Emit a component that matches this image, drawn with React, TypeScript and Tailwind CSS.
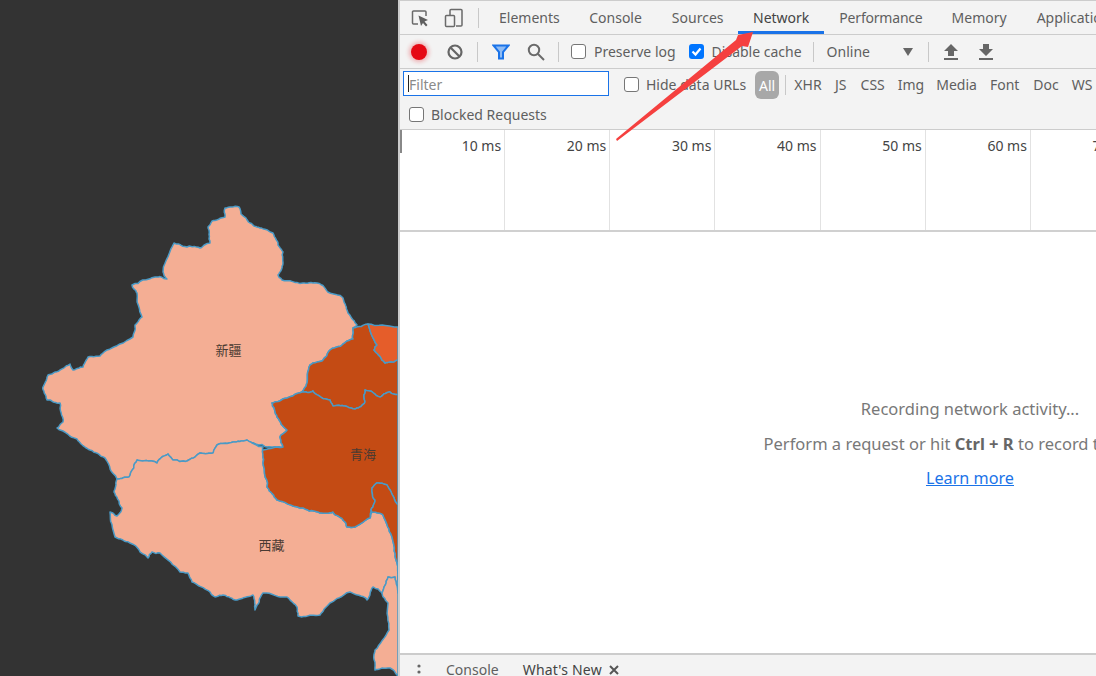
import React from "react";

const xinjiang = "M225,208 L232,207 L239,207 L241,214 L250,223 L260,228 L273,233 L278,245 L283,252 L283,263 L278,275 L282,280 L303,283 L317,283 L330,293 L343,298 L348,313 L357,325 L353,328 L353,339 L342,345 L330,350 L323,360 L310,365 L307,383 L302,392 L287,398 L272,403 L277,417 L287,430 L280,437 L283,447 L267,447 L247,440 L233,442 L217,445 L213,453 L200,453 L187,461 L173,460 L168,454 L162,457 L157,463 L137,460 L129,477 L117,479 L105,458 L90,450 L77,439 L57,428 L63,422 L60,403 L50,400 L47,400 L43,387 L48,375 L60,370 L70,364 L73,370 L83,367 L88,357 L100,356 L107,350 L133,337 L135,325 L142,317 L137,293 L132,285 L155,277 L167,279 L163,272 L174,243 L187,247 L200,248 L210,243 L208,227 L212,221 L225,217 Z";
const xizang = "M117,479 L129,477 L137,460 L157,463 L162,457 L168,454 L173,460 L187,461 L200,453 L213,453 L217,445 L233,442 L247,440 L263,447 L263,463 L267,487 L277,500 L300,508 L320,513 L333,512 L345,522 L347,527 L355,527 L370,518 L372,512 L383,515 L392,537 L397,563 L398,593 L395,577 L388,577 L382,593 L373,587 L367,600 L350,592 L330,603 L320,615 L298,616 L297,607 L287,597 L263,593 L255,610 L253,595 L237,600 L223,595 L215,597 L210,592 L192,582 L188,573 L180,572 L160,553 L152,552 L148,558 L130,543 L115,537 L110,512 L117,516 L122,508 L114,492 Z";
const yunnan = "M382,593 L388,577 L395,577 L398,593 L398,676 L390,668 L375,670 L375,650 L389,630 L388,603 Z";
const qinghai = "M353,328 L368,324 L377,345 L374,350 L385,363 L398,360 L398,395 L390,392 L380,397 L365,390 L365,402 L355,409 L345,406 L333,406 L330,400 L322,398 L313,391 L302,392 L307,383 L310,365 L323,360 L330,350 L342,345 L353,339 Z";
const qinghai2 = "M272,403 L287,398 L302,392 L313,391 L322,398 L330,400 L333,406 L345,406 L355,409 L365,402 L365,390 L380,397 L390,392 L398,395 L398,505 L387,485 L377,483 L372,488 L375,500 L371,510 L370,518 L355,527 L347,527 L345,522 L333,512 L320,513 L300,508 L277,500 L267,487 L263,463 L263,450 L283,447 L280,437 L287,430 L277,417 Z";
const sichuan = "M377,483 L387,485 L398,505 L398,593 L397,563 L392,537 L383,515 L372,512 L371,510 L375,500 L372,488 Z";
const ningxia = "M368,324 L398,327 L398,360 L385,363 L374,350 L377,345 Z";

// Adds the fine, coast-like wobble of a map outline. The offset depends only on
// the midpoint, so a border shared by two provinces wobbles the same way in both.
function hash(x: number, y: number) {
  const s = Math.sin(x * 12.9898 + y * 78.233) * 43758.5453;
  return s - Math.floor(s) - 0.5;
}
function wobble(a: number[], b: number[], level: number): number[][] {
  const len = Math.hypot(a[0] - b[0], a[1] - b[1]);
  if (level === 0 || len < 2.5) return [];
  const mx = (a[0] + b[0]) / 2;
  const my = (a[1] + b[1]) / 2;
  const amp = Math.min(2.2, len * 0.22);
  const m = [mx + hash(mx, my) * amp, my + hash(my, mx) * amp];
  return [...wobble(a, m, level - 1), m, ...wobble(m, b, level - 1)];
}
function rough(d: string) {
  const pts = d.replace(/[MZ]/g, "").split("L").map((p) => p.trim().split(",").map(Number));
  const out: number[][] = [];
  pts.forEach((p, i) => {
    const q = pts[(i + 1) % pts.length];
    out.push(p);
    const onEdge = p[0] >= 398 && q[0] >= 398;
    if (!onEdge) out.push(...wobble(p, q, 3));
  });
  return "M" + out.map((p) => p[0].toFixed(1) + "," + p[1].toFixed(1)).join(" L") + " Z";
}

function Box({ checked }: { checked?: boolean }) {
  if (checked) {
    return (
      <span className="flex h-[15px] w-[15px] shrink-0 items-center justify-center rounded-[3px] bg-[#0075ff]">
        <svg width="13" height="13" viewBox="0 0 13 13" fill="none" stroke="#fff" strokeWidth="2.2">
          <path d="M2.5 6.5 L5.5 9.5 L10.5 3.5" />
        </svg>
      </span>
    );
  }
  return <span className="block h-[15px] w-[15px] shrink-0 rounded-[3px] border border-[#767676] bg-white" />;
}

const tabs = [
  ["Elements", "px-[15px]"],
  ["Console", "pl-[14.5px] pr-[15px]"],
  ["Sources", "pl-[15px] pr-[14.5px]"],
  ["Network", "border-b-[3px] border-[#1a73e8] px-[15px] pt-[3px] text-[#444444]"],
  ["Performance", "pl-[15px] pr-[14px] tracking-[-0.2px]"],
  ["Memory", "px-[15px]"],
  ["Application", "px-[15px]"],
];
const types = [
  ["XHR", "ml-[8px] tracking-[0.2px]"],
  ["JS", "ml-[13px]"],
  ["CSS", "ml-[14px]"],
  ["Img", "ml-[13px]"],
  ["Media", "ml-[12px]"],
  ["Font", "ml-[13px]"],
  ["Doc", "ml-[14px]"],
  ["WS", "ml-[13px]"],
];
const ticks = ["10 ms", "20 ms", "30 ms", "40 ms", "50 ms", "60 ms", "70 ms"];

export default function App() {
  return (
    <div
      className="relative flex h-[676px] w-[1096px] overflow-hidden bg-[#333333] text-[14px] text-[#5f5f5f]"
      style={{ fontFamily: '"Noto Sans", "Noto Sans CJK SC", sans-serif' }}
    >
      <div className="w-[398px] shrink-0">
        <svg width="398" height="676" viewBox="0 0 398 676" className="block">
          <g stroke="#4a9ac6" strokeWidth="1.5" strokeLinejoin="round">
            <path d={rough(xinjiang)} fill="#f4ae94" />
            <path d={rough(xizang)} fill="#f4ae94" />
            <path d={rough(yunnan)} fill="#f4ae94" />
            <path d={rough(qinghai)} fill="#c44b14" />
            <path d={rough(qinghai2)} fill="#c44b14" />
            <path d={rough(sichuan)} fill="#c44b14" />
            <path d={rough(ningxia)} fill="#e55d2a" />
          </g>
          <g fontSize="13" fill="#4a3a32" textAnchor="middle" style={{ fontFamily: '"Noto Sans CJK SC", sans-serif' }}>
            <text x="228.5" y="355">新疆</text>
            <text x="363" y="459">青海</text>
            <text x="271.5" y="550">西藏</text>
          </g>
        </svg>
      </div>

      <div className="flex h-full w-[698px] shrink-0 flex-col overflow-hidden border-l-2 border-[#cccccc] bg-[#f3f3f3]">
        {/* tabs */}
        <div className="flex h-[35px] shrink-0 items-center border-b border-t border-[#cccccc] pl-[11px]">
          <svg width="18" height="18" viewBox="0 0 18 18" fill="none" className="shrink-0">
            <path d="M7 15 H2.5 a1 1 0 0 1 -1 -1 V3 a1 1 0 0 1 1 -1 H14 a1 1 0 0 1 1 1 V7" stroke="#6a6a6a" strokeWidth="1.5" />
            <path d="M7.5 6.5 L17 11 L13.5 12.5 L16.5 16 L15 17.5 L12 14 L10 17 Z" fill="#5f5f5f" />
          </svg>
          <svg width="20" height="20" viewBox="0 0 20 20" fill="none" className="ml-[15px] shrink-0">
            <path d="M6 7 V2.5 a1 1 0 0 1 1 -1 H17 a1 1 0 0 1 1 1 V17 a1 1 0 0 1 -1 1 H12" stroke="#6a6a6a" strokeWidth="1.5" />
            <rect x="1.5" y="7.5" width="9" height="11" rx="1" stroke="#6a6a6a" strokeWidth="1.5" />
          </svg>
          <span className="ml-[14px] h-[20px] w-px shrink-0 bg-[#c8c8c8]" />
          <div className="ml-[5px] flex h-full items-stretch">
            {tabs.map(([t, c]) => (
              <span key={t} className={"flex h-full shrink-0 items-center " + c}>
                {t}
              </span>
            ))}
          </div>
        </div>

        {/* toolbar */}
        <div className="flex h-[34px] shrink-0 items-center border-b border-[#cccccc] pl-[11px]">
          <span className="h-[16px] w-[16px] shrink-0 rounded-full bg-[#e50914] shadow-[0_0_4px_2px_rgba(229,9,20,0.3)]" />
          <svg width="16" height="16" viewBox="0 0 16 16" fill="none" stroke="#666666" strokeWidth="2.2" className="ml-[20px] shrink-0">
            <circle cx="8" cy="8" r="6.5" />
            <path d="M3.5 3.5 L12.5 12.5" />
          </svg>
          <span className="ml-[14px] h-[20px] w-px shrink-0 bg-[#c8c8c8]" />
          <svg width="18" height="16" viewBox="0 0 18 16" fill="#8fbcf5" stroke="#1a73e8" strokeWidth="2" className="ml-[14px] shrink-0">
            <path d="M1.5 1.5 H16.5 L11 8 V14.5 H7 V8 Z" />
          </svg>
          <svg width="18" height="18" viewBox="0 0 18 18" fill="none" stroke="#6a6a6a" strokeWidth="2" className="ml-[17px] shrink-0">
            <circle cx="7" cy="7" r="5.2" />
            <path d="M11 11 L17 17" />
          </svg>
          <span className="ml-[13px] h-[20px] w-px shrink-0 bg-[#c8c8c8]" />
          <span className="ml-[12px] shrink-0"><Box /></span>
          <span className="ml-[8px] whitespace-nowrap">Preserve log</span>
          <span className="ml-[13px] shrink-0"><Box checked /></span>
          <span className="ml-[8px] whitespace-nowrap">Disable cache</span>
          <span className="ml-[11px] h-[20px] w-px shrink-0 bg-[#c8c8c8]" />
          <span className="ml-[13px] whitespace-nowrap">Online</span>
          <svg width="10" height="8" viewBox="0 0 10 8" className="ml-[33px] shrink-0">
            <path d="M0 0 H10 L5 8 Z" fill="#666666" />
          </svg>
          <span className="ml-[15px] h-[20px] w-px shrink-0 bg-[#c8c8c8]" />
          <svg width="14" height="16" viewBox="0 0 14 16" fill="#666666" className="ml-[15px] shrink-0">
            <path d="M7 0 L14 7 H10 V12 H4 V7 H0 Z M0 14 H14 V16 H0 Z" />
          </svg>
          <svg width="14" height="16" viewBox="0 0 14 16" fill="#666666" className="ml-[21px] shrink-0">
            <path d="M4 0 H10 V5 H14 L7 12 L0 5 H4 Z M0 14 H14 V16 H0 Z" />
          </svg>
        </div>

        {/* filter row */}
        <div className="flex h-[31px] shrink-0 items-center pb-[1px] pl-[3px] pt-[2px]">
          <div className="flex h-[25px] w-[206px] shrink-0 items-center self-start border border-[#1a73e8] bg-white pl-[4px] text-[#8a8a8a]">
            <span className="h-[17px] w-px bg-[#222222]" />
            <span className="mt-[1px]">Filter</span>
          </div>
          <span className="ml-[15px] mb-[1px] shrink-0"><Box /></span>
          <span className="ml-[7px] whitespace-nowrap pb-[2px]">Hide data URLs</span>
          <span className="ml-[9px] flex h-[28px] w-[24px] shrink-0 items-center justify-center rounded-[6px] bg-[#a8a8a8] text-white">All</span>
          <span className="ml-[6px] h-[20px] w-px shrink-0 bg-[#c8c8c8]" />
          {types.map(([t, m]) => (
            <span key={t} className={m + " whitespace-nowrap pb-[2px]"}>{t}</span>
          ))}
        </div>

        {/* blocked */}
        <div className="flex h-[30px] shrink-0 items-center border-b border-[#cccccc] pl-[9px]">
          <Box />
          <span className="ml-[7px] whitespace-nowrap">Blocked Requests</span>
        </div>

        {/* timeline */}
        <div className="relative flex h-[102px] shrink-0 border-b-2 border-[#d0d0d0] bg-white">
          <span className="absolute left-0 top-0 h-[23px] w-[2px] bg-[#888888]" />
          {ticks.map((t) => (
            <div key={t} className="h-full w-[105.15px] shrink-0 border-r border-[#e2e2e2] pr-[3px] pt-[5px] text-right whitespace-nowrap text-[#444444]">
              {t}
            </div>
          ))}
        </div>

        {/* empty state */}
        <div className="min-h-0 flex-1 overflow-hidden bg-white">
          <div className="flex w-[1140px] flex-col items-center pt-[159px] text-[16.5px] leading-[35px] text-[#787878]">
            <span className="whitespace-nowrap">Recording network activity...</span>
            <span className="whitespace-nowrap">
              Perform a request or hit <b className="font-bold text-[#666666]">Ctrl + R</b> to record the reload.
            </span>
            <span className="whitespace-nowrap text-[16.2px] text-[#1a73e8] underline">Learn more</span>
          </div>
        </div>

        {/* drawer */}
        <div className="flex h-[23px] shrink-0 items-start border-t-2 border-[#cccccc] pl-[17px] leading-[30px]">
          <svg width="4" height="14" viewBox="0 0 4 14" className="mt-[9px] shrink-0">
            <circle cx="2" cy="2" r="1.6" fill="#666666" />
            <circle cx="2" cy="8" r="1.6" fill="#666666" />
          </svg>
          <span className="ml-[25px] whitespace-nowrap">Console</span>
          <span className="ml-[24px] whitespace-nowrap tracking-[0.2px] text-[#444444]">What's New</span>
          <svg width="10" height="10" viewBox="0 0 10 10" stroke="#555555" strokeWidth="2" className="ml-[7px] mt-[10px] shrink-0">
            <path d="M1 1 L9 9 M9 1 L1 9" />
          </svg>
        </div>
      </div>

      {/* annotation arrow over the page */}
      <svg width="1096" height="676" viewBox="0 0 1096 676" className="pointer-events-none absolute left-0 top-0">
        <polygon points="753,32 738,35 736,40 616,139 617,141 742,46 748,47" fill="#f5403f" />
      </svg>
    </div>
  );
}
